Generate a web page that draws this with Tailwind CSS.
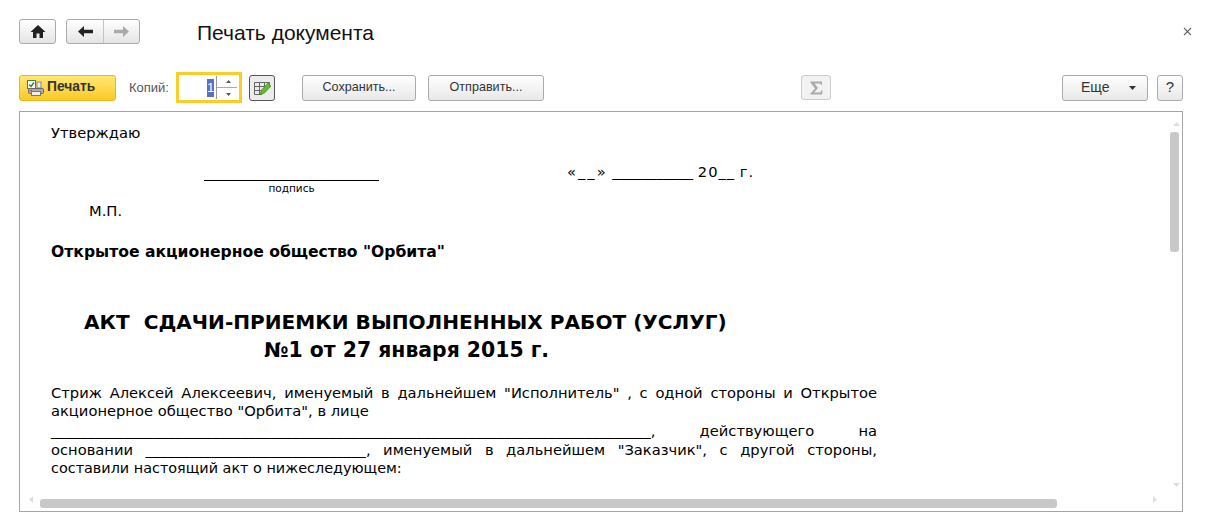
<!DOCTYPE html>
<html lang="ru">
<head>
    <meta charset="UTF-8">
    <title>Печать документа</title>
    <script src="https://cdn.jsdelivr.net/npm/@tailwindcss/browser@4"></script>
</head>
<body class="bg-white w-[1209px] h-[526px] overflow-hidden font-['Liberation_Sans',Arial,sans-serif] text-[#333]">

    <!-- top bar -->
    <div class="flex items-center h-[25px] mt-[19px] ml-[19px] relative">
        <button class="w-[37px] h-[25px] flex items-center justify-center rounded-[3px] border border-[#aaa] bg-gradient-to-b from-white to-[#e4e4e4]">
            <svg width="16" height="13" viewBox="0 0 16 13"><path d="M8 0 L15.5 7 L13 7 L13 13 L9.5 13 L9.5 8.5 L6.5 8.5 L6.5 13 L3 13 L3 7 L0.5 7 Z" fill="#222"/></svg>
        </button>
        <div class="ml-[10px] w-[74px] h-[25px] flex rounded-[3px] border border-[#aaa] bg-gradient-to-b from-white to-[#e4e4e4]">
            <div class="w-[37px] flex items-center justify-center border-r border-[#c4c4c4]">
                <svg width="15" height="11" viewBox="0 0 15 11"><path d="M0 5.5 L6 0 L6 3.8 L15 3.8 L15 7.2 L6 7.2 L6 11 Z" fill="#222"/></svg>
            </div>
            <div class="flex-1 flex items-center justify-center">
                <svg width="15" height="11" viewBox="0 0 15 11"><path d="M15 5.5 L9 0 L9 3.8 L0 3.8 L0 7.2 L9 7.2 L9 11 Z" fill="#aaa"/></svg>
            </div>
        </div>
        <h1 class="ml-[57px] mt-[2px] text-[21px] leading-[25px] text-[#111] font-normal">Печать документа</h1>
        <span class="absolute left-[1164px] top-[8px]">
            <svg class="block" width="9" height="9" viewBox="0 0 9 9"><path d="M1 1 L8 8 M8 1 L1 8" stroke="#666" stroke-width="1.1" fill="none"/></svg>
        </span>
    </div>

    <!-- toolbar -->
    <div class="flex items-center h-[31px] mt-[28px] ml-[19px] w-[1164px] text-[12.6px]">
        <button class="w-[97px] h-[26px] flex items-center rounded-[3px] border border-[#e8b820] bg-gradient-to-b from-[#ffe96e] to-[#fcc81e] font-bold text-[13.8px] text-[#333]">
            <svg class="ml-[7px]" width="17" height="16" viewBox="0 0 17 16">
                <rect x="0.5" y="0.5" width="8" height="8" fill="#fff" stroke="#3a8a3a"/>
                <path d="M2 4.5 L4 6.5 L7 2.5" stroke="#2f8f2f" stroke-width="1.5" fill="none"/>
                <rect x="10" y="2" width="4" height="6" fill="#eee" stroke="#888"/>
                <rect x="1.5" y="8.5" width="15" height="5" rx="1" fill="#aaa" stroke="#666"/>
                <rect x="4.5" y="11.5" width="9" height="4" fill="#eee" stroke="#777"/>
                <rect x="3" y="10" width="2" height="1" fill="#d33"/>
            </svg>
            <span class="ml-[3px]">Печать</span>
        </button>
        <span class="ml-[13px] w-[47px] text-[#555] text-[13px]">Копий:</span>
        <div class="w-[66px] h-[31px] flex border-[3px] border-[#fbcd2a] bg-white">
            <div class="w-[37px] pr-[2px] flex items-center justify-end">
                <span class="h-[18px] w-[7px] bg-[#5a6fc8] text-white text-[13px] leading-[18px] text-center">1</span>
            </div>
            <div class="w-[1px] h-[23px] mt-[1px] bg-[#999]"></div>
            <div class="flex-1 flex flex-col items-center justify-center relative">
                <svg class="mb-[5px]" width="5" height="3" viewBox="0 0 5 3"><path d="M2.5 0 L5 3 L0 3 Z" fill="#555"/></svg>
                <div class="absolute left-0 right-[2px] top-[12px] h-[1px] bg-[#aaa]"></div>
                <svg class="mt-[5px]" width="5" height="3" viewBox="0 0 5 3"><path d="M2.5 3 L5 0 L0 0 Z" fill="#555"/></svg>
            </div>
        </div>
        <button class="ml-[7px] w-[26px] h-[26px] flex items-center justify-center rounded-[3px] border border-[#555] bg-[#ececec]">
            <svg width="18" height="17" viewBox="0 0 18 17">
                <path d="M1.5 3.5 H16.5 V9 M1.5 7.5 H16.5 M1.5 11.5 H12 M1.5 15.5 H9 M1.5 3.5 V15.5 M6.5 3.5 V15.5 M11.5 3.5 V12" stroke="#666" fill="none"/>
                <path d="M7 15.5 L8.5 11 L15 4 L18 7 L11.5 14 Z" fill="#6ab82e" stroke="#3f8a18" stroke-width="0.7"/>
            </svg>
        </button>
        <button class="ml-[27px] w-[114px] h-[26px] rounded-[3px] border border-[#aaa] bg-gradient-to-b from-white to-[#e8e8e8]">Сохранить...</button>
        <button class="ml-[12px] w-[116px] h-[26px] rounded-[3px] border border-[#aaa] bg-gradient-to-b from-white to-[#e8e8e8]">Отправить...</button>
        <button class="ml-[257px] w-[30px] h-[25px] flex items-center justify-center rounded-[3px] border border-[#ccc] bg-[#f2f2f2]">
            <svg width="13" height="14" viewBox="0 0 13 14"><path d="M0.5 0.5 H12 V4 H11 L10.5 2.5 H4.5 L8 7 L4 11.5 H10.5 L11 9.5 H12.5 L12 13.5 H0.5 V12.5 L5 7.5 L0.5 1.5 Z" fill="#aaa"/></svg>
        </button>
        <button class="ml-[231px] w-[86px] h-[26px] flex items-center rounded-[3px] border border-[#aaa] bg-gradient-to-b from-white to-[#e8e8e8]">
            <span class="ml-[18px] w-[48px] text-left text-[14px]">Еще</span>
            <svg width="7" height="4" viewBox="0 0 7 4"><path d="M0 0 H7 L3.5 4 Z" fill="#333"/></svg>
        </button>
        <button class="ml-[9px] w-[26px] h-[26px] rounded-[3px] border border-[#aaa] bg-gradient-to-b from-white to-[#e8e8e8] text-[15px]">?</button>
    </div>

    <!-- document panel -->
    <div class="relative mt-[8px] ml-[19px] w-[1164px] h-[401px] border border-[#a5a5a5] overflow-hidden">
        <div class="pl-[31px] pt-[11px] w-[857px] font-['DejaVu_Sans',Verdana,sans-serif] text-[14.7px] text-black">
            <p class="h-[20px] leading-[20px]">Утверждаю</p>
            <div class="flex h-[29px] mt-[19px]">
                <div class="ml-[153px] w-[175px] h-[19px] border-b border-black"></div>
                <div class="ml-[188px] leading-[20px] whitespace-pre"><span class="tracking-[2px]">«__»</span> ___________ <span class="tracking-[1px]">20__</span> <span class="tracking-[1px]">г.</span></div>
            </div>
            <p class="ml-[153px] w-[175px] h-[12px] -mt-[9px] text-center text-[10.5px] leading-[12px]">подпись</p>
            <p class="ml-[38px] mt-[7px] h-[20px] leading-[20px]">М.П.</p>
            <p class="mt-[21px] h-[20px] leading-[20px] text-[15.6px] font-bold">Открытое акционерное общество "Орбита"</p>
            <p class="ml-[33px] mt-[48px] h-[24px] leading-[24px] text-[20.1px] font-bold whitespace-pre">АКТ  СДАЧИ-ПРИЕМКИ ВЫПОЛНЕННЫХ РАБОТ (УСЛУГ)</p>
            <p class="ml-[213px] mt-[4px] h-[24px] leading-[24px] text-[20.4px] font-bold">№1 от 27 января 2015 г.</p>
            <div class="mt-[22px] w-[826px] leading-[18px] [text-align-last:justify]">
                <p>Стриж Алексей Алексеевич, именуемый в дальнейшем "Исполнитель" , с одной стороны и Открытое</p>
                <p class="[text-align-last:left]">акционерное общество "Орбита", в лице</p>
                <p class="mt-[1px] leading-[20px]"><span class="tracking-[-0.03px]">__________________________________________________________________________________</span>, действующего на</p>
                <p>основании ______________________________, именуемый в дальнейшем "Заказчик", с другой стороны,</p>
                <p class="[text-align-last:left] text-[14.4px]">составили настоящий акт о нижеследующем:</p>
            </div>
        </div>

        <!-- scrollbars -->
        <svg class="absolute left-[1153px] top-[10px]" width="7" height="4" viewBox="0 0 7 4"><path d="M3.5 0 L7 4 H0 Z" fill="#ddd"/></svg>
        <div class="absolute left-[1150px] top-[20px] w-[9px] h-[120px] rounded-[3px] bg-[#c8c8c8]"></div>
        <svg class="absolute left-[1153px] top-[371px]" width="7" height="4" viewBox="0 0 7 4"><path d="M3.5 4 L7 0 H0 Z" fill="#ddd"/></svg>
        <svg class="absolute left-[9px] top-[384px]" width="4" height="7" viewBox="0 0 4 7"><path d="M0 3.5 L4 0 V7 Z" fill="#ddd"/></svg>
        <div class="absolute left-[20px] top-[387px] w-[1017px] h-[9px] rounded-[3px] bg-[#c8c8c8]"></div>
        <svg class="absolute left-[1133px] top-[384px]" width="4" height="7" viewBox="0 0 4 7"><path d="M4 3.5 L0 0 V7 Z" fill="#ddd"/></svg>
    </div>

</body>
</html>
